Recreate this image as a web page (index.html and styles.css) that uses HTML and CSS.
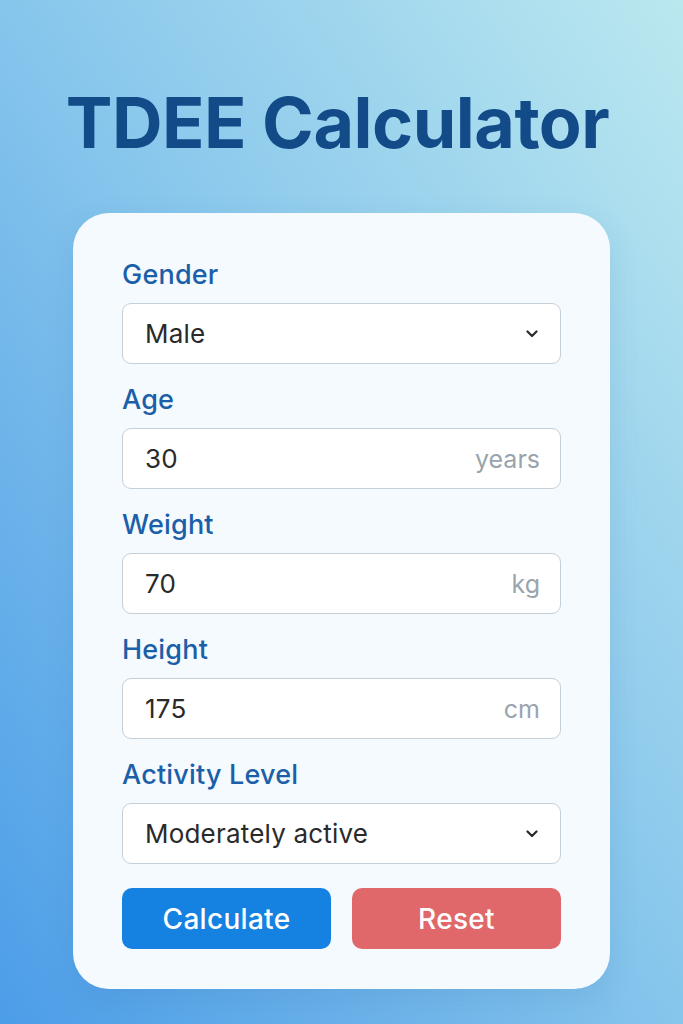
FILE: index.html
```html
<!DOCTYPE html>
<html lang="en">
<head>
    <meta charset="UTF-8">
    <meta name="viewport" content="width=device-width, initial-scale=1.0">
    <title>TDEE Calculator</title>
    <link rel="stylesheet" href="styles.css">
</head>
<body>
    <h1 class="title">TDEE Calculator</h1>

    <form class="card" onsubmit="return false">
        <div class="field">
            <label class="label">Gender</label>
            <div class="box">
                <select class="control">
                    <option>Male</option>
                    <option>Female</option>
                </select>
                <svg class="chevron" viewBox="0 0 12 8" width="12" height="8">
                    <path d="M1.5 1.5 L6 6 L10.5 1.5" fill="none" stroke="#2b2b2b" stroke-width="2.2" stroke-linecap="round" stroke-linejoin="round"/>
                </svg>
            </div>
        </div>

        <div class="field">
            <label class="label">Age</label>
            <div class="box">
                <input class="control" type="text" value="30">
                <span class="unit">years</span>
            </div>
        </div>

        <div class="field">
            <label class="label">Weight</label>
            <div class="box">
                <input class="control" type="text" value="70">
                <span class="unit">kg</span>
            </div>
        </div>

        <div class="field">
            <label class="label">Height</label>
            <div class="box">
                <input class="control" type="text" value="175">
                <span class="unit">cm</span>
            </div>
        </div>

        <div class="field">
            <label class="label">Activity Level</label>
            <div class="box">
                <select class="control">
                    <option>Sedentary</option>
                    <option>Lightly active</option>
                    <option selected>Moderately active</option>
                    <option>Very active</option>
                </select>
                <svg class="chevron" viewBox="0 0 12 8" width="12" height="8">
                    <path d="M1.5 1.5 L6 6 L10.5 1.5" fill="none" stroke="#2b2b2b" stroke-width="2.2" stroke-linecap="round" stroke-linejoin="round"/>
                </svg>
            </div>
        </div>

        <div class="actions">
            <button class="btn calc" type="submit">Calculate</button>
            <button class="btn reset" type="reset">Reset</button>
        </div>
    </form>
</body>
</html>
```

FILE: styles.css
```css
* {
    margin: 0;
    padding: 0;
    box-sizing: border-box;
}

body {
    min-height: 100vh;
    display: flex;
    flex-direction: column;
    align-items: center;
    background: linear-gradient(to top right, #4c9de8 0%, #86c5ec 50%, #bbe8ef 100%);
    font-family: 'Inter', 'Noto Sans', sans-serif;
}

.title {
    margin: 83px 8px 0 0;
    font-size: 70px;
    font-weight: 700;
    letter-spacing: -0.5px;
    color: #134b89;
    line-height: 80px;
}

.card {
    margin-top: 50px;
    width: 537px;
    padding: 47px 49px 40px;
    background: #f5faff;
    border-radius: 36px;
    box-shadow: 0 10px 30px rgba(30, 90, 160, 0.12);
    display: flex;
    flex-direction: column;
    gap: 21px;
}

.field {
    display: flex;
    flex-direction: column;
    gap: 13px;
}

.label {
    font-size: 27px;
    font-weight: 500;
    letter-spacing: 0.2px;
    line-height: 30px;
    color: #1b5fa9;
}

.box {
    height: 61px;
    display: flex;
    align-items: center;
    padding: 0 20px 0 22px;
    background: #fff;
    border: 1px solid #c3d0da;
    border-radius: 9px;
}

.control {
    flex: 1;
    min-width: 0;
    border: none;
    outline: none;
    background: transparent;
    appearance: none;
    -webkit-appearance: none;
    font-family: inherit;
    font-size: 26px;
    letter-spacing: 0.2px;
    color: #2a2a2a;
}

.unit {
    font-size: 25px;
    color: #9aa4ad;
}

.chevron {
    margin-right: 2px;
}

.actions {
    margin-top: 3px;
    display: flex;
    gap: 21px;
}

.btn {
    flex: 1;
    height: 61px;
    border: none;
    border-radius: 10px;
    font-family: inherit;
    font-size: 28px;
    font-weight: 500;
    letter-spacing: 0.3px;
    color: #fff;
    cursor: pointer;
}

.calc {
    background: #1581e1;
}

.reset {
    background: #e0686b;
}
```
